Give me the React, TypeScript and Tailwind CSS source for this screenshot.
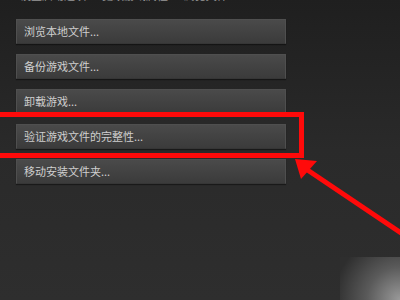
import React from 'react';

const items = [
  '浏览本地文件...',
  '备份游戏文件...',
  '卸载游戏...',
  '验证游戏文件的完整性...',
  '移动安装文件夹...',
];

const font = { fontFamily: '"Noto Sans CJK SC", "DejaVu Sans", sans-serif' };

export default function App() {
  return (
    <div
      className="relative w-[400px] h-[300px] overflow-hidden bg-gradient-to-b from-[#1f1f1f] via-[#2a2a2a] to-[#2e2e2e]"
      style={font}
    >
      {/* caption cut off at the top */}
      <div className="-mt-[12px] pl-[20px] text-[11px] leading-[14px] text-[#9a9a9a] whitespace-nowrap">
        设置启动选项 · 更改游戏属性 · 浏览文件
      </div>

      <div className="flex flex-col gap-[10px] pl-[16px] pt-[17px]">
        {items.map((label) => (
          <div
            key={label}
            className="w-[270px] h-[25px] flex items-center pl-[7px] text-[11px] text-[#cfcfcf] bg-gradient-to-b from-[#4a4a4a] to-[#3b3b3b] border border-[#4f4f4f] border-b-[#363636] shadow-[0_1px_1px_rgba(0,0,0,0.4)]"
          >
            {label}
          </div>
        ))}
      </div>

      {/* watermark glow, bottom right */}
      <div className="absolute left-[340px] top-[257px] w-[60px] h-[43px] bg-[radial-gradient(circle_at_100%_100%,#9a9a9a_0%,#5a5a5a_45%,#2e2e2e_90%)]" />

      {/* red highlight box */}
      <div className="absolute left-[-10px] top-[112px] w-[314px] h-[46px] border-[5px] border-[#ff0a0a]" />

      {/* red arrow */}
      <svg className="absolute left-0 top-0" width="400" height="300" viewBox="0 0 400 300">
        <line x1="306" y1="169" x2="410" y2="239" stroke="#ff0a0a" strokeWidth="5" />
        <polygon points="295,159 317,161 301,179" fill="#ff0a0a" />
      </svg>
    </div>
  );
}
